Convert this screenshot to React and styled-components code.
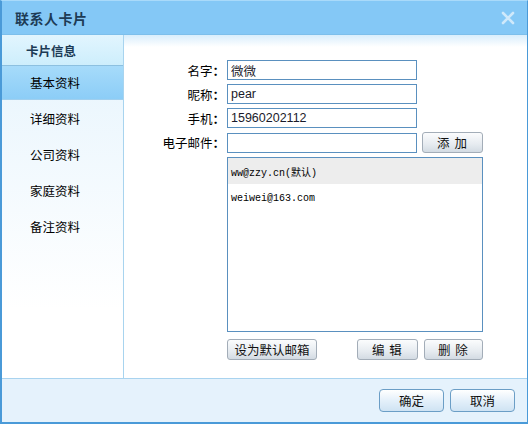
import React, { useState } from "react";
import styled, { createGlobalStyle } from "styled-components";

const Global = createGlobalStyle`
  html, body { margin: 0; padding: 0; background: #fff; }
  body { font-family: "Noto Sans CJK SC", "Liberation Sans", sans-serif; font-size: 12px; color: #000; }
`;

const Window = styled.div`
  width: 528px;
  height: 424px;
  box-sizing: border-box;
  border: 1px solid #4a9ad8;
  border-top-color: #a9dafa;
  border-left-width: 2px;
  border-bottom-width: 2px;
  display: flex;
  flex-direction: column;
  background: #fff;
  overflow: hidden;
`;

const TitleBar = styled.div`
  height: 33px;
  flex: none;
  background: #84c8f6;
  display: flex;
  align-items: center;
  justify-content: space-between;
  padding: 0 12px 0 13px;
  border-bottom: 1px solid #7dbfeb;
`;

const Title = styled.div`
  font-size: 14px;
  font-weight: bold;
  color: #1d3b55;
  letter-spacing: 0.5px;
`;

const Body = styled.div`
  flex: 1;
  display: flex;
  min-height: 0;
`;

const Sidebar = styled.div`
  width: 121px;
  flex: none;
  border-right: 1px solid #a8d4ef;
  background: linear-gradient(#e6f4fd, #ffffff 80%);
  display: flex;
  flex-direction: column;
`;

const SideHead = styled.div`
  height: 30px;
  display: flex;
  align-items: center;
  padding-left: 24px;
  font-weight: bold;
  font-size: 12.5px;
  color: #1d3b55;
  background: linear-gradient(#e2f5fe, #cdeefc);
  border-bottom: 1px solid #8cc0e0;
`;

const SideItem = styled.div`
  height: ${p => (p.$active ? "33px" : "36px")};
  display: flex;
  align-items: center;
  padding-left: 28px;
  font-size: 12.5px;
  background: ${p => (p.$active ? "linear-gradient(#a6dbfa, #8ccdf7)" : "transparent")};
  border-bottom: ${p => (p.$active ? "1px solid #a0cfee" : "none")};
  cursor: pointer;
`;

const Content = styled.div`
  flex: 1;
  background: linear-gradient(#d9eefc, #ffffff 12px);
  padding: 25px 0 0 0;
`;

const Form = styled.div`
  display: grid;
  grid-template-columns: 98px 190px 61px;
  column-gap: 5px;
  row-gap: 4px;
  align-items: center;
`;

const Label = styled.label`
  text-align: right;
  font-size: 12.5px;
  white-space: nowrap;
  margin-right: -3px;
`;

const Colon = styled.span`
  font-weight: bold;
`;

const Input = styled.input`
  box-sizing: border-box;
  height: 20px;
  width: 190px;
  border: 1px solid #5a90bf;
  padding: 0 3px;
  font-family: "Liberation Sans", "Noto Sans CJK SC", sans-serif;
  font-size: 12.5px;
  color: #1a1a2a;
  outline: none;
  grid-column: 2;
`;

const Btn = styled.button`
  box-sizing: border-box;
  height: 21px;
  width: ${p => p.$w || "60px"};
  border: 1px solid #a3adb8;
  border-radius: 3px;
  background: linear-gradient(#fbfcfd, #e6ebf0 60%, #d3dbe3);
  font-family: "Noto Sans CJK SC", sans-serif;
  font-size: 12.5px;
  color: #111;
  letter-spacing: ${p => p.$sp || "0"};
  padding: 0;
  cursor: pointer;
`;

const EmailList = styled.div`
  grid-column: 2 / 4;
  box-sizing: border-box;
  height: 175px;
  border: 1px solid #5a90bf;
  width: 256px;
`;

const EmailRow = styled.div`
  height: 26px;
  display: flex;
  align-items: center;
  padding-left: 3px;
  background: ${p => (p.$sel ? "#ededed" : "#fff")};
  font-family: "Liberation Mono", "Noto Sans CJK SC", monospace;
  font-size: 10px;
  margin-bottom: 1px;
`;

const EmailBtns = styled.div`
  grid-column: 2 / 4;
  display: flex;
  gap: 6px;
  margin-top: 3px;
  & > :first-child { margin-right: 34px; }
`;

const Footer = styled.div`
  height: 43px;
  flex: none;
  background: #e5f2fc;
  border-top: 1px solid #a9d3ef;
  display: flex;
  justify-content: flex-end;
  align-items: center;
  gap: 6px;
  padding-right: 12px;
`;

const FootBtn = styled.button`
  box-sizing: border-box;
  width: 65px;
  height: 23px;
  border: 1px solid #6b9ec6;
  border-radius: 4px;
  background: linear-gradient(#ffffff, #e4f0fa 50%, #cfe3f3);
  font-family: "Noto Sans CJK SC", sans-serif;
  font-size: 12.5px;
  color: #111;
  padding: 0;
  cursor: pointer;
`;

const CloseIcon = () => (
  <svg width="14" height="14" viewBox="0 0 14 14">
    <path d="M2 2 L12 12 M12 2 L2 12" stroke="#cfe9fb" strokeWidth="2.6" strokeLinecap="round" />
  </svg>
);

const menu = ["基本资料", "详细资料", "公司资料", "家庭资料", "备注资料"];

export default function App() {
  const [active, setActive] = useState(0);
  const [sel, setSel] = useState(0);
  const emails = ["ww@zzy.cn(默认)", "weiwei@163.com"];

  return (
    <>
      <Global />
      <Window>
        <TitleBar>
          <Title>联系人卡片</Title>
          <CloseIcon />
        </TitleBar>
        <Body>
          <Sidebar>
            <SideHead>卡片信息</SideHead>
            {menu.map((m, i) => (
              <SideItem key={m} $active={i === active} onClick={() => setActive(i)}>
                {m}
              </SideItem>
            ))}
          </Sidebar>
          <Content>
            <Form>
              <Label>名字<Colon>：</Colon></Label>
              <Input defaultValue="微微" />
              <span />
              <Label>昵称<Colon>：</Colon></Label>
              <Input defaultValue="pear" />
              <span />
              <Label>手机<Colon>：</Colon></Label>
              <Input defaultValue="15960202112" />
              <span />
              <Label>电子邮件<Colon>：</Colon></Label>
              <Input defaultValue="" />
              <Btn $w="61px" $sp="1px">添 加</Btn>
              <span />
              <EmailList>
                {emails.map((e, i) => (
                  <EmailRow key={e} $sel={i === sel} onClick={() => setSel(i)}>
                    {e}
                  </EmailRow>
                ))}
              </EmailList>
              <span />
              <EmailBtns>
                <Btn $w="91px">设为默认邮箱</Btn>
                <Btn $w="61px" $sp="1px">编 辑</Btn>
                <Btn $w="60px" $sp="1px">删 除</Btn>
              </EmailBtns>
            </Form>
          </Content>
        </Body>
        <Footer>
          <FootBtn>确定</FootBtn>
          <FootBtn>取消</FootBtn>
        </Footer>
      </Window>
    </>
  );
}
